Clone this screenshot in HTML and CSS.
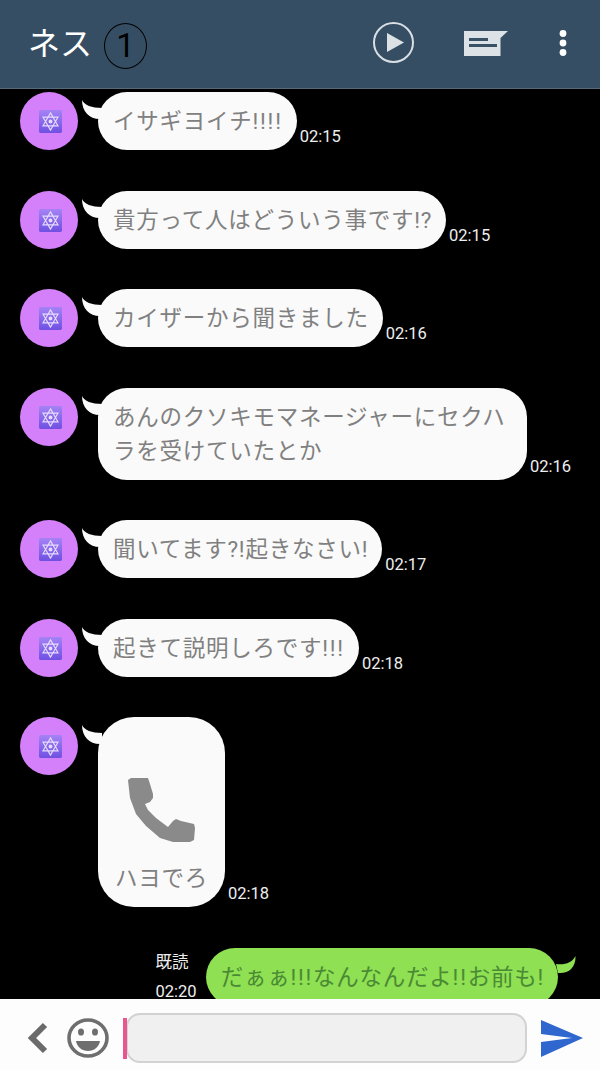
FILE: index.html
```html
<!DOCTYPE html>
<html lang="ja">
<head>
	<meta charset="UTF-8">
	<title>ネス</title>
	<link rel="stylesheet" href="styles.css">
</head>
<body>
	<svg class="defs" width="0" height="0">
		<linearGradient id="icon-bg" x1="0" y1="0" x2="0" y2="1">
			<stop offset="0" stop-color="#a583f5"/>
			<stop offset="1" stop-color="#6f50e2"/>
		</linearGradient>
		<symbol id="avatar-icon" viewBox="0 0 24 24">
			<rect x="0" y="0" width="24" height="24" rx="1.5" fill="url(#icon-bg)"/>
			<path d="M12 3 19.8 16.5H4.2ZM12 21 4.2 7.5H19.8Z" fill="none" stroke="#e6dcff" stroke-width="1.2"/>
			<circle cx="12" cy="12" r="2" fill="#e6dcff"/>
		</symbol>
		<symbol id="tail-left" viewBox="0 0 20 20">
			<path d="M0 0C2 5 10 8 20 8V19C8 20 0 12 0 0Z" fill="#fafafa"/>
		</symbol>
	</svg>

	<div class="app">
		<!-- header -->
		<header class="top">
			<h1 class="top-name">ネス</h1>
			<span class="top-count">1</span>
			<div class="top-icons">
				<svg class="ic-play" viewBox="0 0 41 41"><circle cx="20.5" cy="20.5" r="19.5" fill="none" stroke="#d8dfe5" stroke-width="2"/><path d="M14 11 31 20.5 14 30Z" fill="#dce1e6"/></svg>
				<svg class="ic-note" viewBox="0 0 44 26"><path d="M0 1H44L36.5 8V26H0Z" fill="#dde2e7"/><path d="M5 8H24V11H5ZM5 14H33V17H5Z" fill="#3a5266"/></svg>
				<svg class="ic-more" viewBox="0 0 8 26"><circle cx="4" cy="3.5" r="3.4" fill="#fff"/><circle cx="4" cy="13" r="3.4" fill="#fff"/><circle cx="4" cy="22.5" r="3.4" fill="#fff"/></svg>
			</div>
		</header>

		<!-- messages -->
		<main class="chat">
			<div class="row">
				<div class="avatar"><svg><use href="#avatar-icon"/></svg></div>
				<div class="bubble"><svg class="tail"><use href="#tail-left"/></svg>イサギヨイチ<span class="bang">!!!!</span></div>
				<span class="time">02:15</span>
			</div>
			<div class="row">
				<div class="avatar"><svg><use href="#avatar-icon"/></svg></div>
				<div class="bubble"><svg class="tail"><use href="#tail-left"/></svg>貴方って人はどういう事です!?</div>
				<span class="time">02:15</span>
			</div>
			<div class="row">
				<div class="avatar"><svg><use href="#avatar-icon"/></svg></div>
				<div class="bubble"><svg class="tail"><use href="#tail-left"/></svg>カイザーから聞きました</div>
				<span class="time">02:16</span>
			</div>
			<div class="row">
				<div class="avatar"><svg><use href="#avatar-icon"/></svg></div>
				<div class="bubble bubble-long"><svg class="tail"><use href="#tail-left"/></svg>あんのクソキモマネージャーにセクハラを受けていたとか</div>
				<span class="time">02:16</span>
			</div>
			<div class="row">
				<div class="avatar"><svg><use href="#avatar-icon"/></svg></div>
				<div class="bubble"><svg class="tail"><use href="#tail-left"/></svg>聞いてます?!起きなさい!</div>
				<span class="time">02:17</span>
			</div>
			<div class="row">
				<div class="avatar"><svg><use href="#avatar-icon"/></svg></div>
				<div class="bubble"><svg class="tail"><use href="#tail-left"/></svg>起きて説明しろです<span class="bang">!!!</span></div>
				<span class="time">02:18</span>
			</div>
			<div class="row">
				<div class="avatar"><svg><use href="#avatar-icon"/></svg></div>
				<div class="bubble bubble-call">
					<svg class="tail"><use href="#tail-left"/></svg>
					<svg class="ic-phone" viewBox="0 0 67 65"><path d="M0 2 3 0H20L22 6 25 16V20L22 24 17 26 20 32 28 40 40 49 45 43 48 41 53 43 66 46 67 50 66 62 62 64H45L32 60 18 48 8 36 2 20Z" fill="#8a8a8a"/></svg>
					<span class="call-text">ハヨでろ</span>
				</div>
				<span class="time">02:18</span>
			</div>
			<div class="row row-me">
				<div class="meta">
					<span>既読</span>
					<span>02:20</span>
				</div>
				<div class="bubble bubble-me">だぁぁ<span class="bang">!!!</span>なんなんだよ<span class="bang">!!</span>お前も!
					<svg class="tail-me" viewBox="0 0 20 20"><path d="M19.5 0C16 7 9 9 0 8L2 17C12 18 20 12 19.5 0Z" fill="#8fe052"/></svg>
				</div>
			</div>
		</main>

		<!-- input bar -->
		<footer class="bar">
			<svg class="ic-back" viewBox="0 0 21 32"><path d="M18 3 5 16 18 29" fill="none" stroke="#6a6a6a" stroke-width="6"/></svg>
			<svg class="ic-smile" viewBox="0 0 42 40"><ellipse cx="21" cy="20" rx="19" ry="18" fill="none" stroke="#6e6e6e" stroke-width="3.6"/><ellipse cx="14" cy="14" rx="3" ry="3.6" fill="#6e6e6e"/><ellipse cx="28" cy="14" rx="3" ry="3.6" fill="#6e6e6e"/><path d="M9 23H33C32 29 27 33 21 33C15 33 10 29 9 23Z" fill="#6e6e6e"/></svg>
			<div class="input-wrap"><i class="cursor"></i><div class="input"></div></div>
			<svg class="ic-send" viewBox="0 0 42 37"><path d="M0 0 42 18 0 37V22L31 18 0 14Z" fill="#2f67cf"/></svg>
		</footer>
	</div>
</body>
</html>
```
FILE: styles.css
```css
html,body{
	margin: 0;
	padding: 0;
	background-color: #000;
}
.defs{
	position: absolute;
}
.app{
	display: flex;
	flex-direction: column;
	width: 600px;
	height: 1070px;
	overflow: hidden;
	font-family: Roboto, "Noto Sans CJK JP", sans-serif;
}

/* header */
.top{
	display: flex;
	align-items: center;
	flex: none;
	height: 89px;
	padding: 0 28px 3px;
	box-sizing: border-box;
	background-color: #364e63;
	border-bottom: 1px solid #56697a;
}
.top-name{
	margin: 0 0 4px;
	font-size: 32px;
	font-weight: 400;
	color: #fff;
}
.top-count{
	display: flex;
	align-items: center;
	justify-content: center;
	width: 41px;
	height: 44px;
	margin: 6px 0 0 12px;
	border: 1.5px solid #000;
	border-radius: 50%;
	font-size: 33px;
	color: #000;
}
.top-icons{
	display: flex;
	align-items: center;
	margin-left: auto;
}
.ic-play{
	width: 41px;
	height: 41px;
}
.ic-note{
	width: 44px;
	height: 26px;
	margin-left: 50px;
}
.ic-more{
	width: 8px;
	height: 26px;
	margin-left: 51px;
	margin-right: 5px;
}

/* chat */
.chat{
	display: flex;
	flex-direction: column;
	flex: 1;
	min-height: 0;
	gap: 40.5px;
	padding-top: 3px;
	overflow: hidden;
}
.row{
	display: flex;
	align-items: flex-end;
	flex: none;
	padding-left: 20px;
}
.avatar{
	display: flex;
	align-items: center;
	justify-content: center;
	flex: none;
	align-self: flex-start;
	width: 58px;
	height: 58px;
	border-radius: 50%;
	background-color: #d580fb;
}
.avatar svg{
	width: 23px;
	height: 23px;
	margin: 1px 0 0 2px;
}
.bubble{
	position: relative;
	margin-left: 20px;
	padding: 14px 14px 14px 15px;
	border-radius: 29px;
	background-color: #fafafa;
	font-size: 22.5px;
	letter-spacing: .75px;
	line-height: 30px;
	color: #808080;
	white-space: nowrap;
}
.bubble-long{
	width: 400px;
	padding: 12px 14px 12px 15px;
	line-height: 34px;
	white-space: normal;
}
/* 느낌표 간격 */
.bang{
	letter-spacing: 1.75px;
}
.tail{
	position: absolute;
	top: 8px;
	left: -16px;
	width: 20px;
	height: 20px;
}
.time{
	margin: 0 0 4px 3px;
	font-size: 16.5px;
	color: #eee;
}

/* call bubble */
.bubble-call{
	display: flex;
	flex-direction: column;
	align-items: center;
	box-sizing: border-box;
	width: 127px;
	height: 190px;
	padding: 61px 0 0;
	border-radius: 36px;
}
.ic-phone{
	width: 67px;
	height: 65px;
	flex: none;
}
.call-text{
	margin-top: 20px;
}

/* my message */
.row-me{
	align-items: flex-start;
	justify-content: flex-end;
	padding: 0 42px 0 0;
}
.meta{
	display: flex;
	flex-direction: column;
	gap: 13px;
	margin-top: 7px;
	font-size: 16.5px;
	line-height: 16px;
	color: #eee;
}
.bubble-me{
	margin-left: 9px;
	background-color: #8fe052;
	color: #4a8a35;
}
.tail-me{
	position: absolute;
	top: 8px;
	right: -18px;
	width: 20px;
	height: 20px;
}

/* input bar */
.bar{
	display: flex;
	align-items: center;
	flex: none;
	height: 71px;
	padding: 7px 0 0 27px;
	box-sizing: border-box;
	background-color: #fdfdfd;
}
.ic-back{
	width: 21px;
	height: 32px;
}
.ic-smile{
	width: 42px;
	height: 40px;
	margin-left: 19px;
}
.input-wrap{
	display: flex;
	align-items: center;
	margin-left: 14px;
}
.cursor{
	display: block;
	position: relative;
	z-index: 1;
	width: 3.5px;
	height: 41px;
	margin-right: -1px;
	background-color: #e8558f;
}
.input{
	box-sizing: border-box;
	width: 401px;
	height: 50px;
	border: 2px solid #d2d2d2;
	border-radius: 14px;
	background-color: #f0f0f0;
}
.ic-send{
	width: 42px;
	height: 37px;
	margin-left: 14px;
}
```
